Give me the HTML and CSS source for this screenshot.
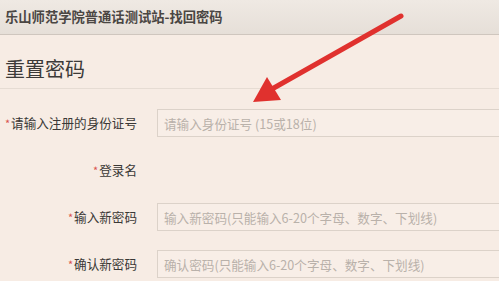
FILE: index.html
```html
<!DOCTYPE html>
<html lang="zh-CN">
<head>
<meta charset="utf-8">
<title>找回密码</title>
<link rel="stylesheet" href="styles.css">
</head>
<body>
<div class="topbar">乐山师范学院普通话测试站-找回密码</div>
<main class="page">
  <h1 class="title">重置密码</h1>
  <form class="form">
    <label class="label"><span class="req">*</span>请输入注册的身份证号</label>
    <div class="field"><input class="input" type="text" placeholder="请输入身份证号 (15或18位)"></div>
    <label class="label"><span class="req">*</span>登录名</label>
    <div class="field"></div>
    <label class="label"><span class="req">*</span>输入新密码</label>
    <div class="field"><input class="input" type="text" placeholder="输入新密码(只能输入6-20个字母、数字、下划线)"></div>
    <label class="label"><span class="req">*</span>确认新密码</label>
    <div class="field"><input class="input" type="text" placeholder="确认密码(只能输入6-20个字母、数字、下划线)"></div>
  </form>
</main>
<svg class="arrow" width="499" height="281" viewBox="0 0 499 281">
  <line x1="401" y1="16" x2="272" y2="89" stroke="#e0312e" stroke-width="5" stroke-linecap="round"/>
  <polygon points="253,102 267,77 281,100" fill="#e0312e"/>
</svg>
</body>
</html>
```
FILE: styles.css
```css
html, body {
  margin: 0;
  padding: 0;
}
body {
  background: #f7ece4;
  font-family: "Noto Sans CJK SC", "Noto Sans", sans-serif;
  color: #3a3a3a;
  width: 499px;
  height: 281px;
  overflow: hidden;
  position: relative;
}
.topbar {
  height: 34px;
  line-height: 34px;
  padding-left: 5px;
  font-size: 13.3px;
  font-weight: bold;
  color: #4a4643;
  background: linear-gradient(#efe9e3, #e6dfd8);
  border-bottom: 1px solid #cfc6be;
}
.title {
  margin: 0;
  padding: 20px 0 0 5px;
  height: 33px;
  font-size: 20px;
  font-weight: normal;
  line-height: 28px;
  color: #3c3a38;
  border-bottom: 1px solid #e6dcd3;
}
.form {
  display: grid;
  grid-template-columns: 137px 1fr;
  column-gap: 20px;
  row-gap: 19px;
  margin-top: 20px;
}
.label {
  height: 28px;
  line-height: 28px;
  text-align: right;
  font-size: 12.6px;
  color: #3a3836;
  white-space: nowrap;
}
.req {
  color: #d9534f;
  font-size: 11px;
  margin-right: 1px;
}
.field {
  height: 28px;
  min-width: 0;
}
.input {
  box-sizing: border-box;
  width: 100%;
  height: 28px;
  border: 1px solid #dcd2c9;
  border-right: none;
  background: #f8eee7;
  padding: 0 6px;
  font-family: "Noto Sans CJK SC", "Noto Sans", sans-serif;
  font-size: 12.6px;
  outline: none;
}
.input::placeholder {
  color: #b9b1aa;
}
.arrow {
  position: absolute;
  left: 0;
  top: 0;
  pointer-events: none;
}
```
